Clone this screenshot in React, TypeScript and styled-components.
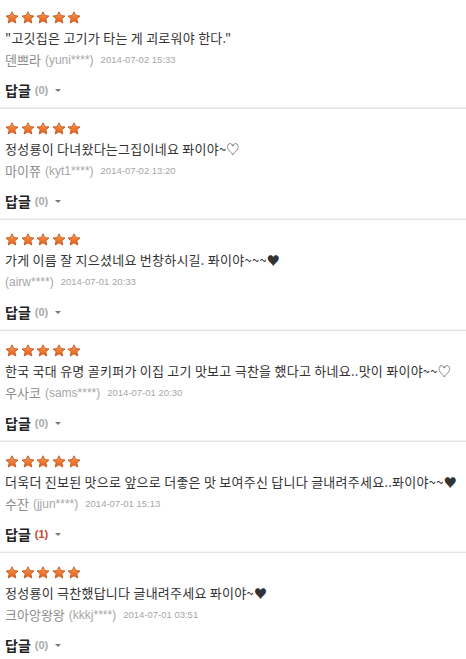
import React from 'react';
import styled, { createGlobalStyle } from 'styled-components';

type Review = {
  text: string;
  name?: string;
  userId: string;
  date: string;
  replies: number;
};

const REVIEWS: Review[] = [
  { text: '"고깃집은 고기가 타는 게 괴로워야 한다."', name: '덴쁘라', userId: 'yuni****', date: '2014-07-02 15:33', replies: 0 },
  { text: '정성룡이 다녀왔다는그집이네요 퐈이야~♡', name: '마이쮸', userId: 'kyt1****', date: '2014-07-02 13:20', replies: 0 },
  { text: '가게 이름 잘 지으셨네요 번창하시길. 퐈이야~~~♥', userId: 'airw****', date: '2014-07-01 20:33', replies: 0 },
  { text: '한국 국대 유명 골키퍼가 이집 고기 맛보고 극찬을 했다고 하네요..맛이 퐈이야~~♡', name: '우사코', userId: 'sams****', date: '2014-07-01 20:30', replies: 0 },
  { text: '더욱더 진보된 맛으로 앞으로 더좋은 맛 보여주신 답니다 글내려주세요..퐈이야~~♥', name: '수잔', userId: 'jjun****', date: '2014-07-01 15:13', replies: 1 },
  { text: '정성룡이 극찬했답니다 글내려주세요 퐈이야~♥', name: '크아앙왕왕', userId: 'kkkj****', date: '2014-07-01 03:51', replies: 0 },
];

const GlobalStyle = createGlobalStyle`
  body {
    margin: 0;
    background: #fff;
    font-family: "Noto Sans CJK KR", "Noto Sans", sans-serif;
  }
`;

const List = styled.ul`
  list-style: none;
  margin: 0;
  padding: 0;
  width: 466px;
`;

const Item = styled.li`
  padding: 11px 0 9px 5px;
  margin-bottom: 2px;
  border-bottom: 1px solid #e4e4e4;
  box-shadow: 0 -1px 0 #f4f4f4 inset;
`;

const Stars = styled.div`
  display: flex;
  gap: 1.5px;
  height: 13px;
`;

const Comment = styled.p`
  margin: 5px 0 0;
  height: 18px;
  font-size: 13px;
  line-height: 18px;
  color: #333;
  letter-spacing: 0.25px;
  white-space: nowrap;
`;

const Meta = styled.div`
  margin-top: 5px;
  height: 16px;
  display: flex;
  align-items: center;
  gap: 4px;
  color: #a0a0a0;
`;

const Name = styled.span`
  font-size: 13px;
  line-height: 16px;
  color: #8c8c8c;
`;

const UserId = styled.span`
  font-family: "Liberation Sans", "Noto Sans CJK KR", sans-serif;
  font-size: 12px;
  line-height: 16px;
  color: #a6a6a6;
`;

const DateText = styled.span`
  margin-left: 3px;
  font-family: "Liberation Sans", sans-serif;
  font-size: 9.5px;
  line-height: 16px;
  color: #a6a6a6;
`;

const Reply = styled.div`
  margin-top: 13px;
  height: 18px;
  display: flex;
  align-items: center;
  gap: 4px;
  line-height: 18px;
`;

const ReplyLabel = styled.span`
  font-size: 14px;
  font-weight: 700;
  color: #222;
`;

const ReplyCount = styled.span<{ $active: boolean }>`
  font-family: "Liberation Sans", sans-serif;
  font-size: 11px;
  font-weight: 700;
  color: ${(p) => (p.$active ? '#c8452c' : '#a8a8a8')};
`;

const Caret = styled.span`
  margin-left: 3px;
  width: 0;
  height: 0;
  border-left: 3px solid transparent;
  border-right: 3px solid transparent;
  border-top: 3px solid #777;
`;

const Star: React.FC = () => (
  <svg width="14" height="13" viewBox="0 0 14 13">
    <defs>
      <linearGradient id="starFill" x1="0" y1="0" x2="0" y2="1">
        <stop offset="0" stopColor="#f9b27a" />
        <stop offset="0.5" stopColor="#f07a33" />
        <stop offset="1" stopColor="#e2621f" />
      </linearGradient>
    </defs>
    <path
      d="M7 0.8 L8.8 4.6 L13 5 L9.8 7.8 L10.8 12 L7 9.8 L3.2 12 L4.2 7.8 L1 5 L5.2 4.6 Z"
      fill="url(#starFill)"
      stroke="#c4561c"
      strokeWidth="0.9"
      strokeLinejoin="round"
    />
  </svg>
);

const App: React.FC = () => (
  <>
    <GlobalStyle />
    <List>
      {REVIEWS.map((r, i) => (
        <Item key={i}>
          <Stars>
            {[0, 1, 2, 3, 4].map((s) => (
              <Star key={s} />
            ))}
          </Stars>
          <Comment>{r.text}</Comment>
          <Meta>
            {r.name && <Name>{r.name}</Name>}
            <UserId>({r.userId})</UserId>
            <DateText>{r.date}</DateText>
          </Meta>
          <Reply>
            <ReplyLabel>답글</ReplyLabel>
            <ReplyCount $active={r.replies > 0}>({r.replies})</ReplyCount>
            <Caret />
          </Reply>
        </Item>
      ))}
    </List>
  </>
);

export default App;
